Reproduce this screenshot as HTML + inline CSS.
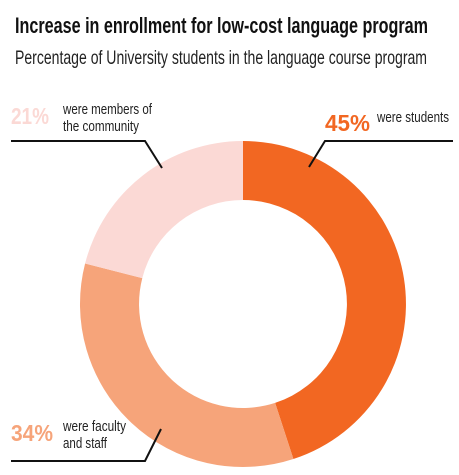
<!DOCTYPE html>
<html><head><meta charset="utf-8"><style>
html,body{margin:0;padding:0;background:#fff;}
svg{display:block;}
text{font-family:"Liberation Sans",sans-serif;}
</style></head><body>
<svg width="459" height="475" viewBox="0 0 459 475" xmlns="http://www.w3.org/2000/svg">
<text x="15" y="33" font-size="22" font-weight="bold" fill="#111" textLength="413" lengthAdjust="spacingAndGlyphs">Increase in enrollment for low-cost language program</text>
<text x="15" y="64" font-size="19.5" fill="#222" textLength="412" lengthAdjust="spacingAndGlyphs">Percentage of University students in the language course program</text>

<path d="M243 141 A163 163 0 0 1 293.4 459 L275.1 402.9 A104 104 0 0 0 243 200 Z" fill="#F26722"/>
<path d="M293.4 459 A163 163 0 0 1 85.1 263.5 L142.3 278.1 A104 104 0 0 0 275.1 402.9 Z" fill="#F6A47A"/>
<path d="M85.1 263.5 A163 163 0 0 1 243 141 L243 200 A104 104 0 0 0 142.3 278.1 Z" fill="#FBD9D5"/>

<polyline points="11,141 145,141 162,168" fill="none" stroke="#111" stroke-width="2"/>
<polyline points="309,167 325,141 453,141" fill="none" stroke="#111" stroke-width="2"/>
<polyline points="11,461 145,461 161,429" fill="none" stroke="#111" stroke-width="2"/>

<text x="11" y="124" font-size="23" font-weight="bold" fill="#FBD9D5" textLength="38" lengthAdjust="spacingAndGlyphs">21%</text>
<text x="63" y="114" font-size="14.5" fill="#222" textLength="89" lengthAdjust="spacingAndGlyphs">were members of</text>
<text x="63" y="131" font-size="14.5" fill="#222" textLength="76" lengthAdjust="spacingAndGlyphs">the community</text>

<text x="325" y="131" font-size="23" font-weight="bold" fill="#F26722" textLength="45" lengthAdjust="spacingAndGlyphs">45%</text>
<text x="377" y="122" font-size="14.5" fill="#222" textLength="72" lengthAdjust="spacingAndGlyphs">were students</text>

<text x="11" y="441" font-size="23" font-weight="bold" fill="#F6A47A" textLength="42" lengthAdjust="spacingAndGlyphs">34%</text>
<text x="63" y="431" font-size="14.5" fill="#222" textLength="63" lengthAdjust="spacingAndGlyphs">were faculty</text>
<text x="63" y="448" font-size="14.5" fill="#222" textLength="44" lengthAdjust="spacingAndGlyphs">and staff</text>
</svg>
</body></html>
